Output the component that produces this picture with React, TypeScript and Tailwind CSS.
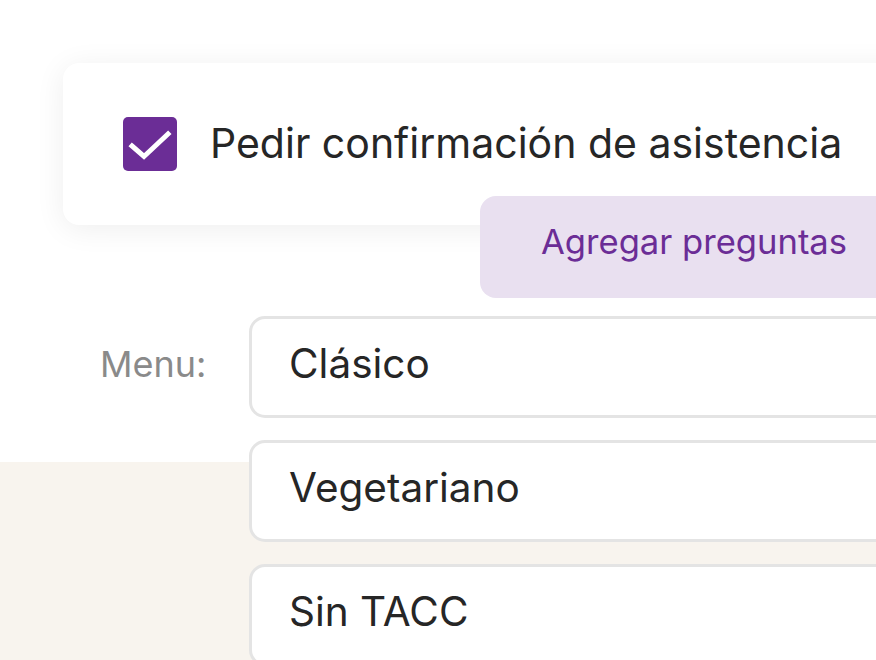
export default function App() {
  const options = ['Clásico', 'Vegetariano', 'Sin TACC'];

  return (
    <div
      className="w-[876px] h-[660px] overflow-hidden bg-[linear-gradient(to_bottom,#ffffff_462px,#f8f4ee_462px)] text-[#262626]"
      style={{ fontFamily: 'Inter, "Noto Sans", sans-serif' }}
    >
      <div className="pt-[63px] pl-[63px]">
        {/* RSVP card */}
        <div className="w-[860px] h-[162px] rounded-2xl bg-white shadow-[0_4px_30px_rgba(0,0,0,0.07)] flex items-center pl-[60px] gap-[33px]">
          <div className="w-[54px] h-[54px] rounded-[5px] bg-[#6b2d96] shrink-0">
            <svg width="54" height="54" viewBox="0 0 54 54" fill="none">
              <path d="M9 29l12 10.5L45 17" stroke="white" strokeWidth="5" strokeLinecap="square" />
            </svg>
          </div>
          <span className="text-[41px] whitespace-nowrap">Pedir confirmación de asistencia</span>
        </div>

        {/* Add questions */}
        <div className="relative z-10 -mt-[29px] ml-[417px] w-[420px] h-[102px] rounded-2xl bg-[#e9e0f0] flex items-center pl-[61px] pb-[10px]">
          <span className="text-[34.6px] text-[#6b2d96] whitespace-nowrap">Agregar preguntas</span>
        </div>
      </div>

      {/* Menu options */}
      <div className="flex mt-[18px]">
        <div className="w-[249px] shrink-0 pl-[100px] h-[101px] flex items-center pb-[6px]">
          <span className="text-[36px] text-[#8a8a8a]">Menu:</span>
        </div>
        <div className="flex flex-col gap-[22px]">
          {options.map((o) => (
            <div
              key={o}
              className="w-[700px] h-[102px] rounded-2xl border-[3px] border-[#e4e4e4] bg-white flex items-center pl-[37px] pb-[6px]"
            >
              <span className="text-[40.5px] whitespace-nowrap">{o}</span>
            </div>
          ))}
        </div>
      </div>
    </div>
  );
}
